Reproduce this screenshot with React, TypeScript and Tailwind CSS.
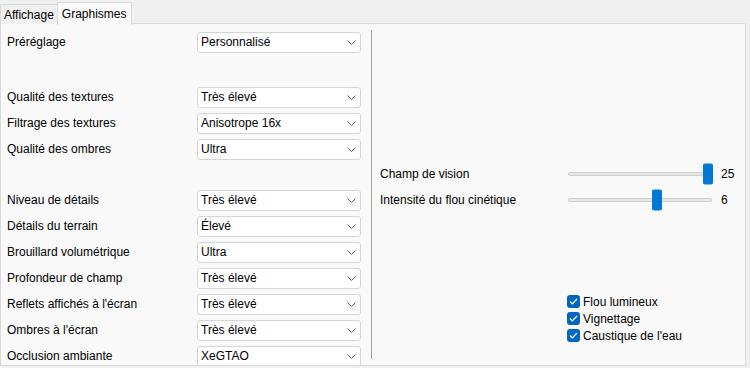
import React from 'react';

const font = { fontFamily: '"Segoe UI", "Liberation Sans", Arial, sans-serif' };

interface RowProps {
  label: string;
  value: string;
}

function Chevron() {
  return (
    <svg width="9" height="5" viewBox="0 0 9 5" className="text-[#5f5f5f]">
      <path d="M0.5 0.5 L4.5 4.5 L8.5 0.5" fill="none" stroke="currentColor" strokeWidth="1" />
    </svg>
  );
}

function SelectRow({ label, value }: RowProps) {
  return (
    <div className="grid h-[26px] shrink-0 grid-cols-[190px_164px] items-center">
      <span className="truncate">{label}</span>
      <div className="flex h-[21px] items-center justify-between rounded-[3px] border border-[#d5d5d5] bg-white pl-[3px] pr-[4px]">
        <span>{value}</span>
        <Chevron />
      </div>
    </div>
  );
}

interface SliderProps {
  label: string;
  value: number;
  min: number;
  max: number;
}

function SliderRow({ label, value, min, max }: SliderProps) {
  const pct = (value - min) / (max - min);
  return (
    <div className="grid h-[26px] grid-cols-[188px_144px_auto] items-center">
      <span>{label}</span>
      <div className="relative h-[4px] rounded-[2px] border border-[#cfcfcf] bg-[#e6e6e6]">
        <div
          className="absolute top-1/2 h-[21px] w-[10px] -translate-y-1/2 rounded-[2px] bg-[#0078d4]"
          style={{ left: `${pct * 135 - 1}px` }}
        />
      </div>
      <span className="pl-[9px]">{value}</span>
    </div>
  );
}

function Check({ label }: { label: string }) {
  return (
    <div className="flex h-[17px] items-center gap-[3px]">
      <span className="flex h-[13px] w-[13px] items-center justify-center rounded-[3px] bg-[#0067c0]">
        <svg width="9" height="7" viewBox="0 0 9 7">
          <path d="M1 3.5 L3.3 5.8 L8 1" fill="none" stroke="white" strokeWidth="1.2" />
        </svg>
      </span>
      <span>{label}</span>
    </div>
  );
}

export default function App() {
  return (
    <div className="flex h-[368px] w-[750px] flex-col bg-[#f0f0f0] text-[12px] text-[#000]" style={font}>
      {/* Tabs */}
      <div className="relative z-10 flex h-[24px] shrink-0 items-end">
        <div className="flex h-[20px] items-center border border-b-0 border-[#d9d9d9] bg-[#f0f0f0] px-[3px]">
          Affichage
        </div>
        <div className="-ml-px -mb-px flex h-[23px] items-center border border-b-0 border-[#d9d9d9] bg-[#f9f9f9] px-[4px]">
          Graphismes
        </div>
      </div>

      {/* Panel */}
      <div className="-mt-px flex h-[343px] w-[746px] shrink-0 overflow-hidden border border-[#d9d9d9] bg-[#f9f9f9]">
        <div className="flex w-[370px] flex-col pl-[6px] pt-[5px]">
          <SelectRow label="Préréglage" value="Personnalisé" />
          <div className="h-[29px] shrink-0" />
          <SelectRow label="Qualité des textures" value="Très élevé" />
          <SelectRow label="Filtrage des textures" value="Anisotrope 16x" />
          <SelectRow label="Qualité des ombres" value="Ultra" />
          <div className="h-[25px] shrink-0" />
          <SelectRow label="Niveau de détails" value="Très élevé" />
          <SelectRow label="Détails du terrain" value="Élevé" />
          <SelectRow label="Brouillard volumétrique" value="Ultra" />
          <SelectRow label="Profondeur de champ" value="Très élevé" />
          <SelectRow label="Reflets affichés à l'écran" value="Très élevé" />
          <SelectRow label="Ombres à l'écran" value="Très élevé" />
          <SelectRow label="Occlusion ambiante" value="XeGTAO" />
        </div>

        <div className="my-[6px] w-px bg-[#a0a0a0]" />

        <div className="flex flex-1 flex-col pl-[8px]">
          <div className="pt-[137px]">
            <SliderRow label="Champ de vision" value={25} min={1} max={25} />
            <SliderRow label="Intensité du flou cinétique" value={6} min={1} max={9} />
          </div>
          <div className="pl-[187px] pt-[80px]">
            <Check label="Flou lumineux" />
            <Check label="Vignettage" />
            <Check label="Caustique de l'eau" />
          </div>
        </div>
      </div>
    </div>
  );
}
